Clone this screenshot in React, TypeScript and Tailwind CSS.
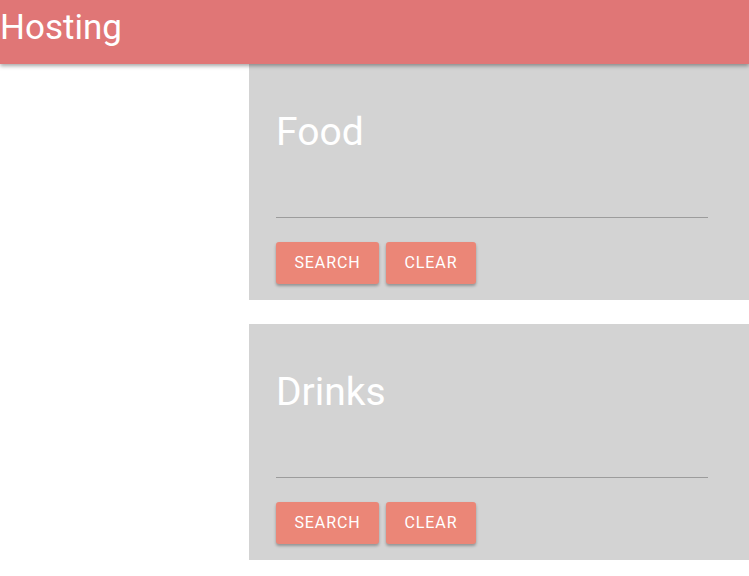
import React from "react"

const Section = ({ title }: { title: string }) => {
  return (
    <section className="bg-[#d3d3d3] h-[236px] pl-[27px] pr-[41px] pt-[38px]">
      <h2 className="text-white text-[39px] leading-[60px] font-normal">{title}</h2>
      <div className="mt-[55px] border-b border-[#9c9c9c] h-0" />
      <div className="flex gap-[7px] mt-[24px]">
        <button className="h-[42px] w-[103px] rounded-[3px] bg-[#eb8677] text-white text-[16px] font-normal tracking-[0.9px] shadow-[0_2px_3px_rgba(0,0,0,0.3)]">
          SEARCH
        </button>
        <button className="h-[42px] w-[90px] rounded-[3px] bg-[#eb8677] text-white text-[16px] font-normal tracking-[0.9px] shadow-[0_2px_3px_rgba(0,0,0,0.3)]">
          CLEAR
        </button>
      </div>
    </section>
  )
}

const App = () => {
  return (
    <div className="min-h-[576px] bg-white font-['Roboto',sans-serif] overflow-hidden">
      {/* header */}
      <header className="relative z-10 h-[64px] bg-[#e07676] shadow-[0_2px_4px_rgba(0,0,0,0.35)]">
        <h1 className="text-white text-[35px] leading-[56px] font-normal">Hosting</h1>
      </header>

      {/* lists */}
      <div className="ml-[249px] flex flex-col gap-[24px]">
        <Section title="Food" />
        <Section title="Drinks" />
      </div>
    </div>
  )
}

export default App
